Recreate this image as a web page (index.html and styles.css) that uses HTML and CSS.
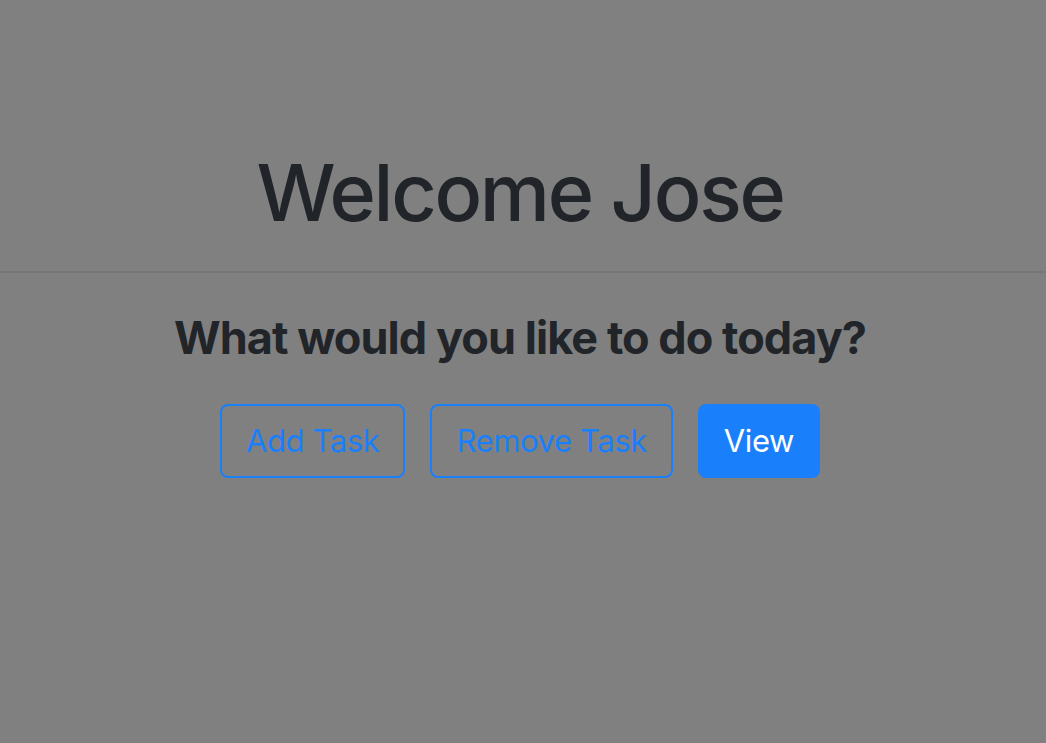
FILE: index.html
```html
<!DOCTYPE html>
<html lang="en">
<head>
<meta charset="utf-8">
<title>Welcome</title>
<link rel="stylesheet" href="styles.css">
</head>
<body>
  <main class="page">
    <header class="hero">
      <h1 class="hero-title">Welcome Jose</h1>
    </header>
    <hr class="divider">
    <section class="actions">
      <h2 class="actions-title">What would you like to do today?</h2>
      <div class="btn-row">
        <button class="btn btn-outline">Add Task</button>
        <button class="btn btn-outline">Remove Task</button>
        <button class="btn btn-solid">View</button>
      </div>
    </section>
  </main>
</body>
</html>
```

FILE: styles.css
```css
* { box-sizing: border-box; }
html, body {
  margin: 0;
  padding: 0;
  background: #808080;
  height: 100%;
}
body {
  font-family: Inter, "Liberation Sans", sans-serif;
  color: #212529;
}
.page {
  display: flex;
  flex-direction: column;
  align-items: stretch;
}
.hero {
  display: flex;
  justify-content: center;
  padding-top: 145px;
  padding-right: 6px;
}
.hero-title {
  margin: 0;
  font-size: 79px;
  font-weight: 500;
  line-height: 1.2;
  letter-spacing: -2.3px;
}
.divider {
  margin: 31px 0 0;
  border: 0;
  height: 2px;
  background: #777777;
}
.actions {
  display: flex;
  flex-direction: column;
  align-items: center;
  padding-top: 38px;
  padding-right: 6px;
}
.actions-title {
  margin: 0;
  font-size: 45px;
  font-weight: 700;
  line-height: 1.2;
  letter-spacing: -0.95px;
}
.btn-row {
  display: flex;
  gap: 25px;
  margin-top: 39px;
}
.btn {
  font-family: Inter, "Liberation Sans", sans-serif;
  font-size: 31px;
  line-height: 46px;
  height: 74px;
  padding: 12px 24px;
  border-radius: 8px;
  border: 2px solid #1a7ffb;
  letter-spacing: -0.4px;
  cursor: pointer;
}
.btn-outline {
  background: transparent;
  color: #1a7ffb;
}
.btn-solid {
  background: #1a7ffb;
  color: #ffffff;
}
```
